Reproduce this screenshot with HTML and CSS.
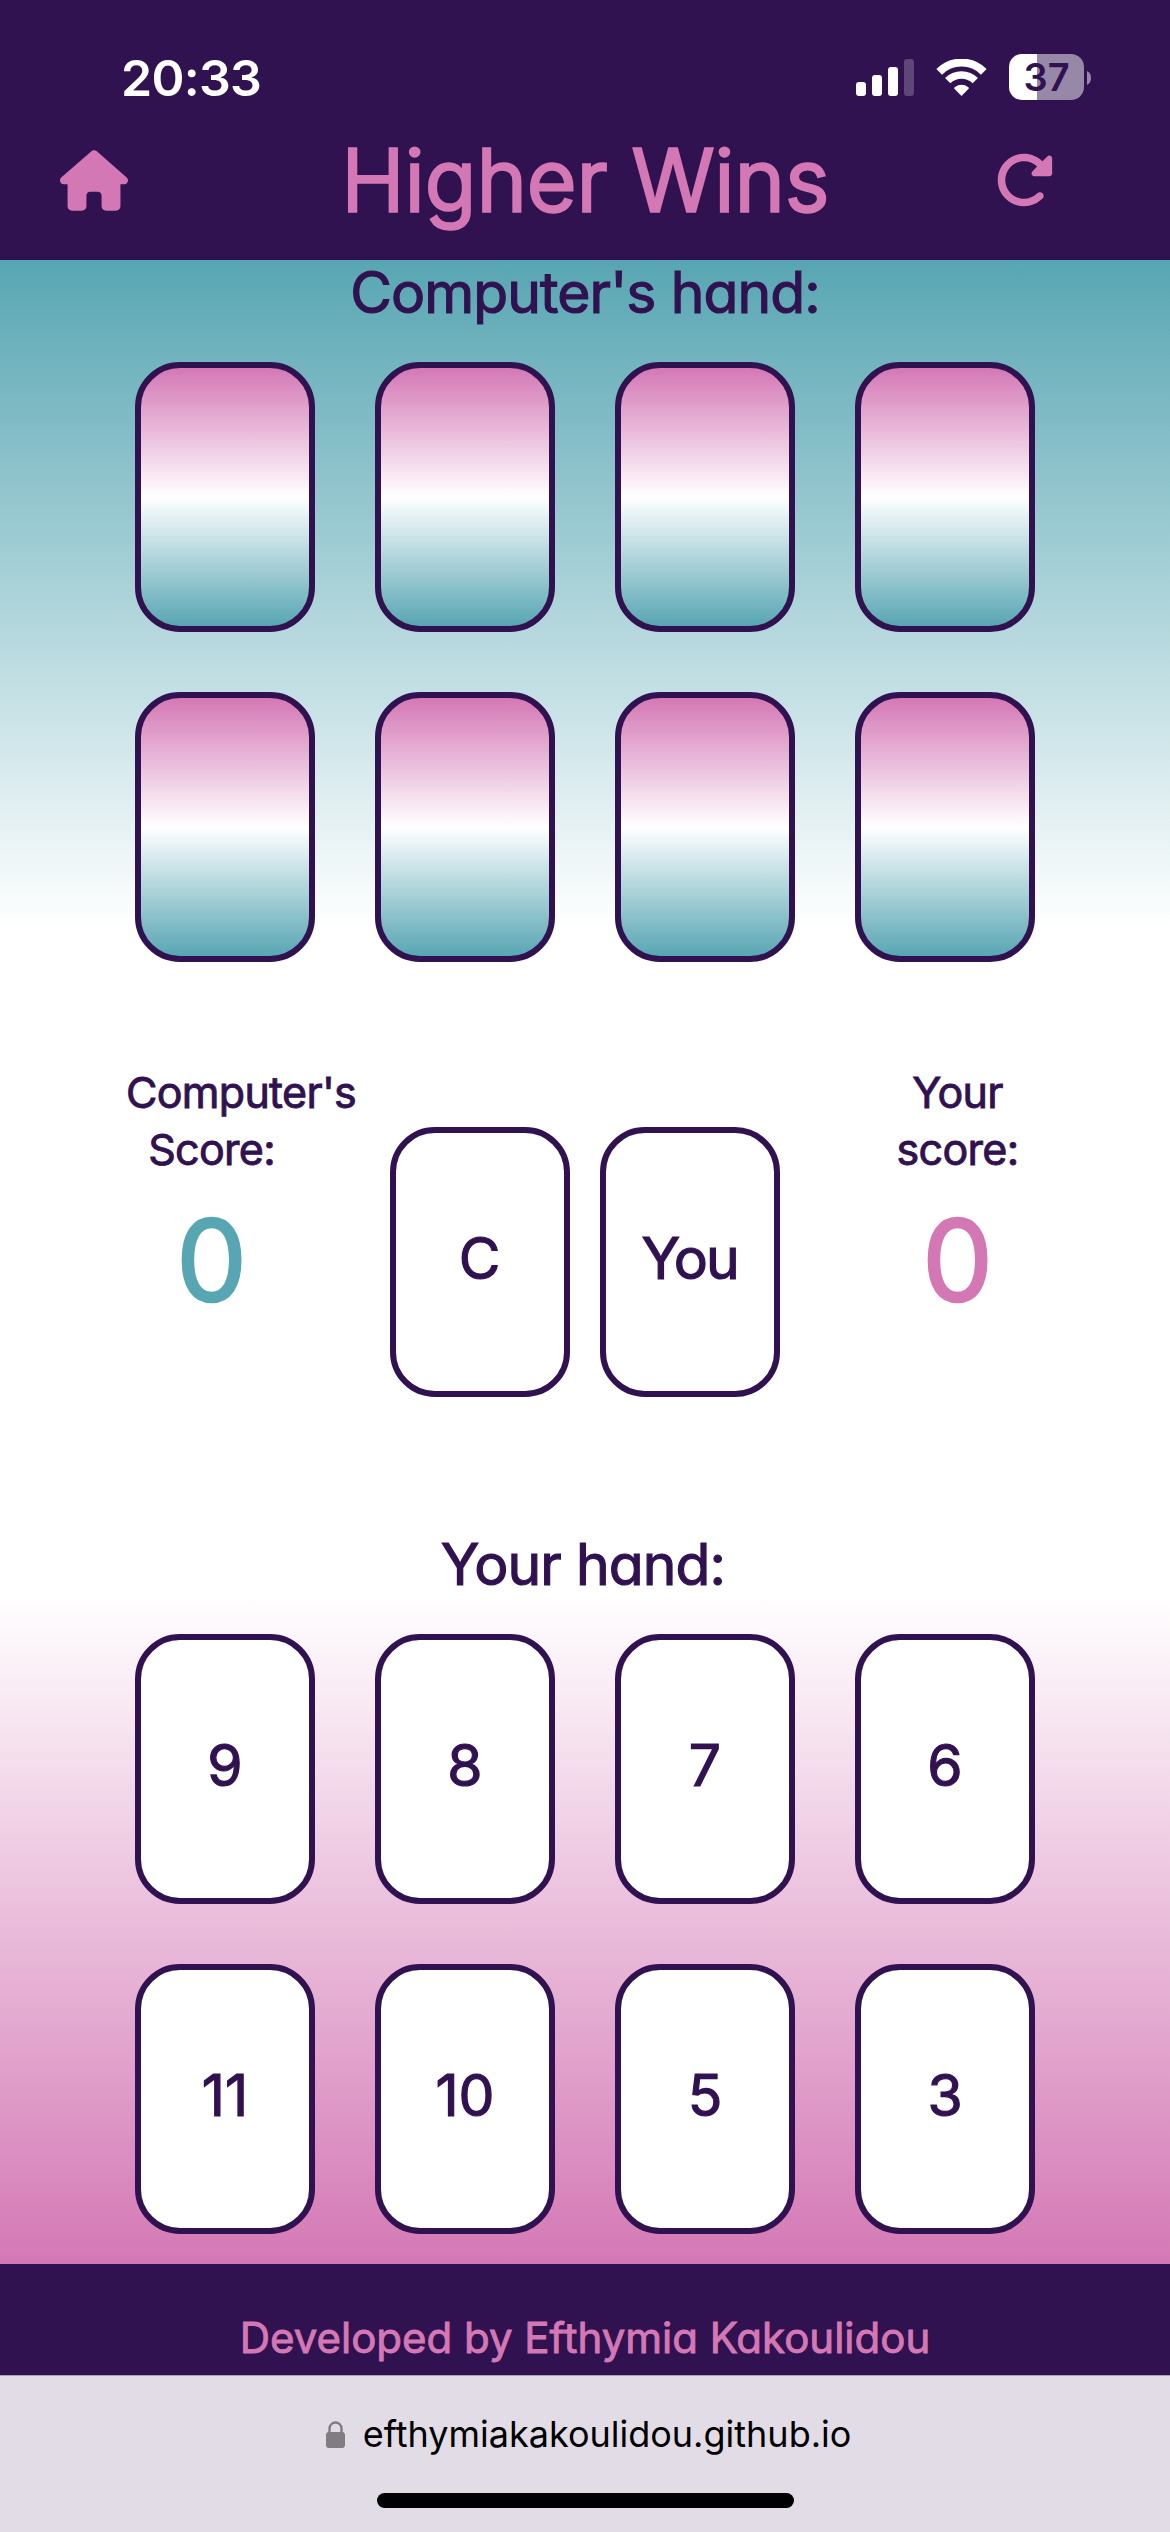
FILE: index.html
```html
<!DOCTYPE html>
<html lang="en">
<head>
<meta charset="utf-8">
<title>Higher Wins</title>
<link rel="stylesheet" href="styles.css">
</head>
<body>
<header class="top">
  <div class="status">
    <span class="time">20:33</span>
    <div class="status-icons">
      <svg class="signal" width="58" height="37" viewBox="0 0 58 37" fill="#fff">
        <rect x="0" y="23" width="10" height="14" rx="3"/>
        <rect x="16" y="16" width="10" height="21" rx="3"/>
        <rect x="32" y="8" width="10" height="29" rx="3"/>
        <rect x="48" y="0" width="10" height="37" rx="3" opacity=".22"/>
      </svg>
      <svg class="wifi" width="51" height="37" viewBox="0 0 51 37" fill="none" stroke="#fff">
        <path d="M3.2 12.8 A31.5 31.5 0 0 1 47.8 12.8" stroke-width="8"/>
        <path d="M11.7 21.6 A19.5 19.5 0 0 1 39.3 21.6" stroke-width="7.5"/>
        <path d="M25.500 37 L18.400 29.800 Q17.700 29 18.600 28.200 Q25.500 23.400 32.400 28.200 Q33.300 29 32.600 29.800 Z" fill="#fff" stroke="none"/>
      </svg>
      <div class="battery"><span class="battery-body">37</span><svg width="4" height="14" viewBox="0 0 4 14" fill="#9788a8"><path d="M0 0Q4 2 4 7T0 14Z"/></svg></div>
    </div>
  </div>
  <nav class="nav">
    <svg class="home" width="68" height="61" viewBox="0 0 576 512"><path fill="#d478b5" d="M575.8 255.500c0 18-15 32.100-32 32.100l-32 0 .7 160.200c0 2.700-.2 5.400-.5 8.100l0 16.200c0 22.100-17.900 40-40 40l-16 0c-1.100 0-2.200 0-3.300-.1c-1.400 .1-2.800 .1-4.200 .1L416 512l-24 0c-22.100 0-40-17.900-40-40l0-24 0-64c0-17.700-14.300-32-32-32l-64 0c-17.700 0-32 14.300-32 32l0 64 0 24c0 22.100-17.900 40-40 40l-24 0-31.900 0c-1.500 0-3-.1-4.500-.2c-1.200 .1-2.400 .2-3.600 .2l-16 0c-22.100 0-40-17.900-40-40l0-112c0-.9 0-1.900 .1-2.800l0-69.700-32 0c-18 0-32-14-32-32.100c0-9 3-17 10-24L266.400 8c7-7 15-8 22-8s15 2 21 7L564.800 231.500c8 7 12 15 11 24z"/></svg>
    <h1 class="title">Higher Wins</h1>
    <svg class="redo" width="60" height="60" viewBox="0 0 512 512"><path fill="#d478b5" d="M463.500 224l8.500 0c13.300 0 24-10.700 24-24l0-128c0-9.700-5.800-18.500-14.800-22.200s-19.300-1.700-26.200 5.200L413.400 96.600c-87.600-86.500-228.700-86.200-315.800 1c-87.500 87.500-87.500 229.300 0 316.800s229.300 87.500 316.800 0c12.500-12.500 12.500-32.800 0-45.300s-32.800-12.500-45.300 0c-62.500 62.500-163.800 62.500-226.300 0s-62.500-163.800 0-226.300c62.200-62.200 162.700-62.500 225.300-1L327 183c-6.900 6.900-8.900 17.200-5.200 26.200s12.500 14.800 22.200 14.800l119.500 0z"/></svg>
  </nav>
</header>

<main class="game">
  <h2 class="hand-title computer-title">Computer's hand:</h2>
  <div class="hand computer-hand">
    <div class="card back"></div><div class="card back"></div><div class="card back"></div><div class="card back"></div>
    <div class="card back"></div><div class="card back"></div><div class="card back"></div><div class="card back"></div>
  </div>

  <section class="table">
    <div class="score">
      <p class="label">Computer's</p>
      <p class="label">Score:</p>
      <p class="points teal">0</p>
    </div>
    <div class="played">
      <div class="card">C</div>
      <div class="card word">You</div>
    </div>
    <div class="score">
      <p class="label">Your</p>
      <p class="label">score:</p>
      <p class="points pink">0</p>
    </div>
  </section>

  <h2 class="hand-title your-title">Your hand:</h2>
  <div class="hand">
    <div class="card">9</div><div class="card">8</div><div class="card">7</div><div class="card">6</div>
    <div class="card">11</div><div class="card">10</div><div class="card">5</div><div class="card">3</div>
  </div>
</main>

<footer class="credit">Developed by Efthymia Kakoulidou</footer>

<div class="browser-bar">
  <div class="address">
    <svg width="19" height="27" viewBox="0 0 19 27"><path d="M3.500 12V7.500a6 6 0 0 1 12 0V12" fill="none" stroke="#7f7d83" stroke-width="2.400"/><rect y="11" width="19" height="16" rx="3" fill="#7f7d83"/></svg>
    <span>efthymiakakoulidou.github.io</span>
  </div>
  <div class="indicator"></div>
</div>
</body>
</html>
```
FILE: styles.css
```css
* { box-sizing: border-box; }

body {
  margin: 0;
  width: 1170px;
  height: 2532px;
  display: flex;
  flex-direction: column;
  font-family: Inter, "Liberation Sans", sans-serif;
  color: #311250;
  background: #fff;
}

h1, h2, p { margin: 0; font-weight: 400; }

/* Header */
.top { height: 260px; background: #311250; color: #fff; }

.status {
  height: 100px;
  padding: 57px 79px 0 121px;
  display: flex;
  justify-content: space-between;
  align-items: flex-start;
}
.time { font-size: 50px; font-weight: 600; line-height: 42px; letter-spacing: -0.7px; }
.status-icons { display: flex; align-items: center; height: 41px; }
.wifi { margin-left: 22px; }
.battery { display: flex; align-items: center; gap: 3px; margin-left: 22px; }
.battery-body {
  width: 75px;
  height: 46px;
  margin: -3px 0 -2px;
  border-radius: 13px;
  background: linear-gradient(90deg, #fff 28px, #9788a8 28px);
  color: #311250;
  font-size: 38px;
  font-weight: 600;
  line-height: 46px;
  text-align: center;
}

.nav {
  height: 160px;
  padding: 0 116px 0 60px;
  display: flex;
  justify-content: space-between;
  align-items: center;
  color: #d478b5;
}
.title, .hand-title, .label, .points, .card, .credit {
  font-feature-settings: "cv11";
  stroke-linejoin: round;
}
.title {
  margin-left: 49px;
  font-size: 85px;
  font-weight: 300;
  line-height: 161px;
  letter-spacing: 0.4px;
  -webkit-text-stroke: 3.4px currentColor;
}

/* Table */
.game {
  height: 2004px;
  display: flex;
  flex-direction: column;
  background: linear-gradient(#58a6b3, #fff 33.3%, #fff 66.6%, #d478b5);
}
.hand-title {
  height: 65px;
  line-height: 66px;
  font-size: 57px;
  font-weight: 400;
  letter-spacing: -0.9px;
  text-align: center;
  -webkit-text-stroke: 1.2px currentColor;
}
.computer-title { margin-bottom: 37px; }
.your-title { margin: 135px 4px 37px 0; }

.hand {
  display: grid;
  grid-template-columns: repeat(4, 180px);
  gap: 60px;
  justify-content: center;
}
.card {
  width: 180px;
  height: 270px;
  padding-bottom: 7px;
  display: flex;
  align-items: center;
  justify-content: center;
  border: 6px solid #311250;
  border-radius: 45px;
  background: #fff;
  font-size: 57px;
  -webkit-text-stroke: 1.2px currentColor;
}
.back { background: linear-gradient(#d478b5, #fff, #58a6b3); }
.word { letter-spacing: -2px; }

.table {
  height: 435px;
  padding: 102px 127px 0 126px;
  display: flex;
  justify-content: space-between;
}
.score {
  width: 171px;
  display: flex;
  flex-direction: column;
}
.label {
  font-size: 43px;
  line-height: 57px;
  letter-spacing: -0.7px;
  text-align: center;
  white-space: nowrap;
  -webkit-text-stroke: 0.9px currentColor;
}
.points {
  margin-top: 22px;
  font-size: 112px;
  font-weight: 400;
  line-height: 121px;
  text-align: center;
  -webkit-text-stroke: 2.5px currentColor;
}
.teal { color: #58a6b3; }
.pink { color: #d478b5; }
.played { display: flex; gap: 30px; padding-top: 63px; }

/* Footer */
.credit {
  height: 111px;
  padding-top: 44px;
  background: #311250;
  color: #d478b5;
  font-size: 42px;
  line-height: 59px;
  letter-spacing: 0;
  text-align: center;
  -webkit-text-stroke: 0.9px currentColor;
}
.browser-bar {
  height: 157px;
  display: flex;
  flex-direction: column;
  align-items: center;
  border-top: 1px solid #aaa3b0;
  background: #e1dce5;
  color: #000;
}
.address {
  margin: 33px 0 0 7px;
  height: 50px;
  display: flex;
  align-items: center;
  gap: 18px;
  font-size: 36px;
  line-height: 50px;
}
.indicator {
  width: 417px;
  height: 15px;
  margin-top: 34px;
  border-radius: 8px;
  background: #000;
}
```
